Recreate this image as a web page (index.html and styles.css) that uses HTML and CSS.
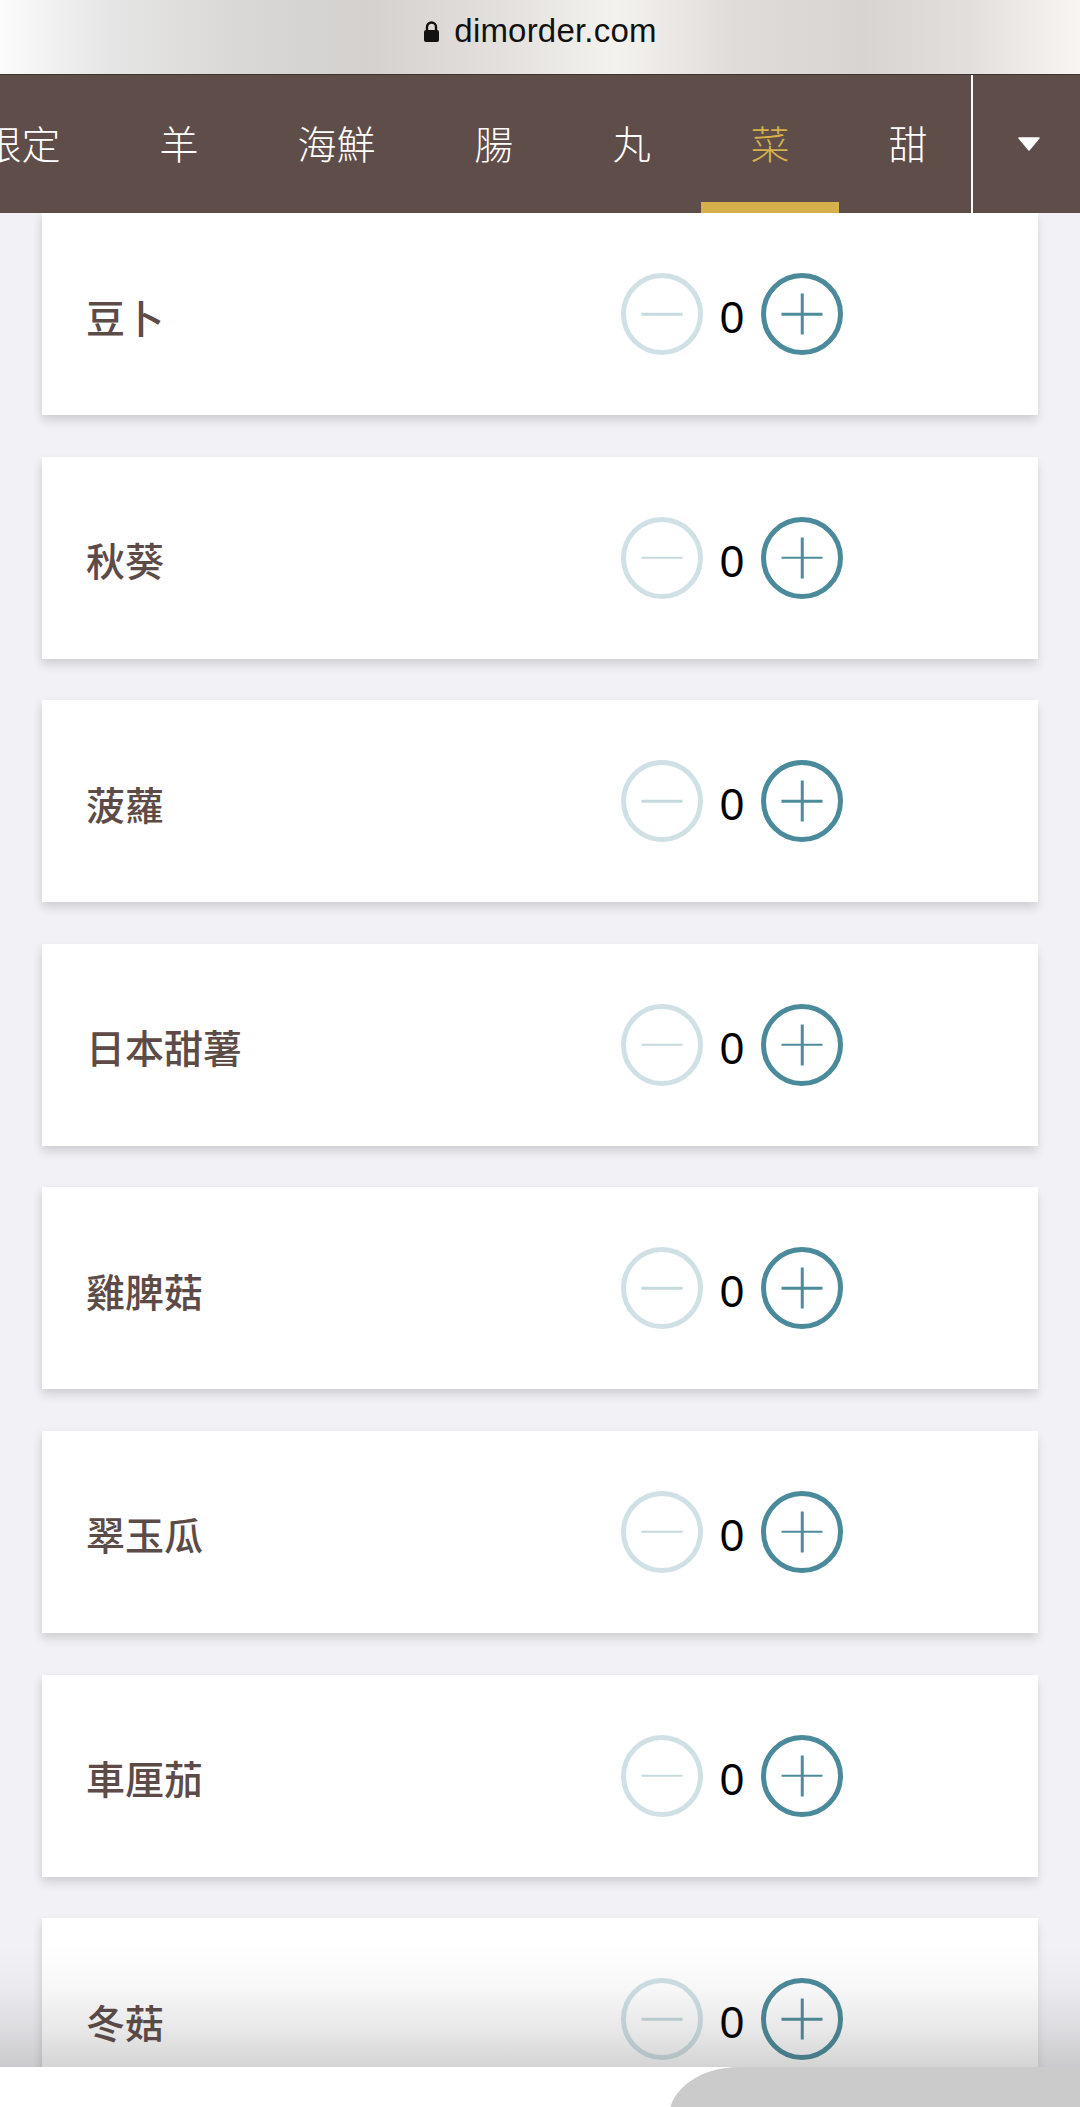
FILE: index.html
```html
<!DOCTYPE html>
<html lang="zh-Hant">
<head>
<meta charset="utf-8">
<title>dimorder</title>
<link rel="stylesheet" href="styles.css">
</head>
<body>
<div class="screen">
  <header class="urlbar">
    <svg class="lock" width="17" height="22" viewBox="0 0 17 22" aria-hidden="true">
      <path d="M4 9 V6 a4.5 4.5 0 0 1 9 0 V9" fill="none" stroke="#111" stroke-width="2.4"/>
      <rect x="1" y="9" width="15" height="12" rx="2" fill="#111"/>
    </svg>
    <span class="url">dimorder.com</span>
  </header>

  <nav class="catbar">
    <div class="cats">
      <div class="cat-track">
        <span class="cat">限定</span>
        <span class="cat">羊</span>
        <span class="cat">海鮮</span>
        <span class="cat">腸</span>
        <span class="cat">丸</span>
        <span class="cat active">菜</span>
        <span class="cat">甜</span>
        <span class="cat">飲</span>
      </div>
    </div>
    <div class="more">
      <svg width="22" height="14" viewBox="0 0 22 14" aria-hidden="true"><path d="M1 1 H21 L11 13 Z" fill="#fff" stroke="#fff" stroke-width="1.5" stroke-linejoin="round"/></svg>
    </div>
  </nav>

  <main class="list">
    <div class="card"><span class="name">豆卜</span><div class="counter"><span class="btn minus"></span><span class="qty">0</span><span class="btn plus"></span></div></div>
    <div class="card"><span class="name">秋葵</span><div class="counter"><span class="btn minus"></span><span class="qty">0</span><span class="btn plus"></span></div></div>
    <div class="card"><span class="name">菠蘿</span><div class="counter"><span class="btn minus"></span><span class="qty">0</span><span class="btn plus"></span></div></div>
    <div class="card"><span class="name">日本甜薯</span><div class="counter"><span class="btn minus"></span><span class="qty">0</span><span class="btn plus"></span></div></div>
    <div class="card"><span class="name">雞脾菇</span><div class="counter"><span class="btn minus"></span><span class="qty">0</span><span class="btn plus"></span></div></div>
    <div class="card"><span class="name">翠玉瓜</span><div class="counter"><span class="btn minus"></span><span class="qty">0</span><span class="btn plus"></span></div></div>
    <div class="card"><span class="name">車厘茄</span><div class="counter"><span class="btn minus"></span><span class="qty">0</span><span class="btn plus"></span></div></div>
    <div class="card"><span class="name">冬菇</span><div class="counter"><span class="btn minus"></span><span class="qty">0</span><span class="btn plus"></span></div></div>
  </main>

  <div class="fade"></div>
  <div class="toolbar"><div class="toolbar-blob"></div></div>
</div>
</body>
</html>
```
FILE: styles.css
```css
* { box-sizing: border-box; }
html, body { margin: 0; padding: 0; }
body {
  width: 1080px;
  height: 2107px;
  overflow: hidden;
  background: #f2f2f6;
  font-family: "Noto Sans CJK TC", "Noto Sans", sans-serif;
}
.screen {
  position: relative;
  width: 1080px;
  height: 2107px;
  overflow: hidden;
}
.urlbar {
  height: 74px;
  display: flex;
  align-items: center;
  justify-content: center;
  gap: 14px;
  padding-bottom: 12px;
  background: linear-gradient(90deg, #fbfbfb 0%, #e6e6e6 10%, #d9d8d6 22%, #d4d1cf 34%, #e2dfdc 46%, #f4f2ef 57%, #e0dcd9 68%, #d8d4d1 80%, #e3dfdc 90%, #f8f5f3 100%);
}
.lock { display: block; margin-top: 2px; }
.url {
  font-family: "Liberation Sans", Arial, sans-serif;
  font-size: 33px;
  color: #111;
  letter-spacing: 0.2px;
}
.catbar {
  height: 139px;
  display: flex;
  background: #5f4d49;
  border-top: 1px solid #3f3230;
}
.cats {
  width: 971px;
  overflow: hidden;
  position: relative;
}
.cat-track {
  display: flex;
  height: 100%;
  margin-left: -67px;
}
.cat {
  position: relative;
  flex: none;
  display: flex;
  align-items: center;
  padding: 0 49.5px 4px;
  font-size: 39px;
  font-weight: 300;
  color: #fff;
  line-height: 1;
}
.cat.active { color: #d6b04a; }
.cat.active::after {
  content: "";
  position: absolute;
  left: 0;
  right: 0;
  bottom: 0;
  height: 11px;
  background: #d6b04a;
}
.more {
  flex: 1;
  border-left: 2px solid #fff;
  display: flex;
  align-items: center;
  justify-content: center;
  padding-left: 4px;
}
.list {
  display: flex;
  flex-direction: column;
  gap: 41.6px;
  padding: 0 42px;
}
.card {
  height: 202px;
  background: #fff;
  display: grid;
  grid-template-columns: 535px auto;
  align-items: center;
  padding-left: 44px;
  box-shadow: 0 7px 9px rgba(0, 0, 0, 0.10), -3px 2px 8px rgba(0, 0, 0, 0.05);
}
.name {
  font-size: 39px;
  font-weight: 500;
  color: #5d4b48;
  line-height: 1;
  padding-top: 4px;
}
.counter {
  display: flex;
  align-items: center;
}
.qty {
  width: 58px;
  text-align: center;
  font-family: "Liberation Sans", Arial, sans-serif;
  font-size: 44px;
  color: #000;
  line-height: 1;
  padding-top: 8px;
}
.btn {
  position: relative;
  width: 82px;
  height: 82px;
  border-radius: 50%;
  border: 5px solid #d0e1e6;
}
.btn::before,
.btn::after {
  content: "";
  position: absolute;
  left: 50%;
  top: 50%;
  background: #c6dade;
}
.btn::before {
  width: 41px;
  height: 2.5px;
  transform: translate(-50%, -50%);
}
.btn.minus::after { display: none; }
.btn.plus { border-color: #4a8a9b; }
.btn.plus::before,
.btn.plus::after { background: #4f8c9b; }
.btn.plus::after {
  width: 2.5px;
  height: 41px;
  transform: translate(-50%, -50%);
}
.fade {
  position: absolute;
  left: 0;
  right: 0;
  top: 1945px;
  height: 122px;
  background: linear-gradient(to bottom, rgba(60, 60, 60, 0) 0%, rgba(60, 60, 60, 0.04) 35%, rgba(60, 60, 60, 0.12) 70%, rgba(60, 60, 60, 0.22) 100%);
  pointer-events: none;
}
.toolbar {
  position: absolute;
  left: 0;
  right: 0;
  top: 2067px;
  height: 40px;
  background: #fff;
  overflow: hidden;
}
.toolbar-blob {
  position: absolute;
  left: 669px;
  top: 0;
  width: 411px;
  height: 100px;
  background: #cbcbcb;
  border-top-left-radius: 70px 50px;
}
```
